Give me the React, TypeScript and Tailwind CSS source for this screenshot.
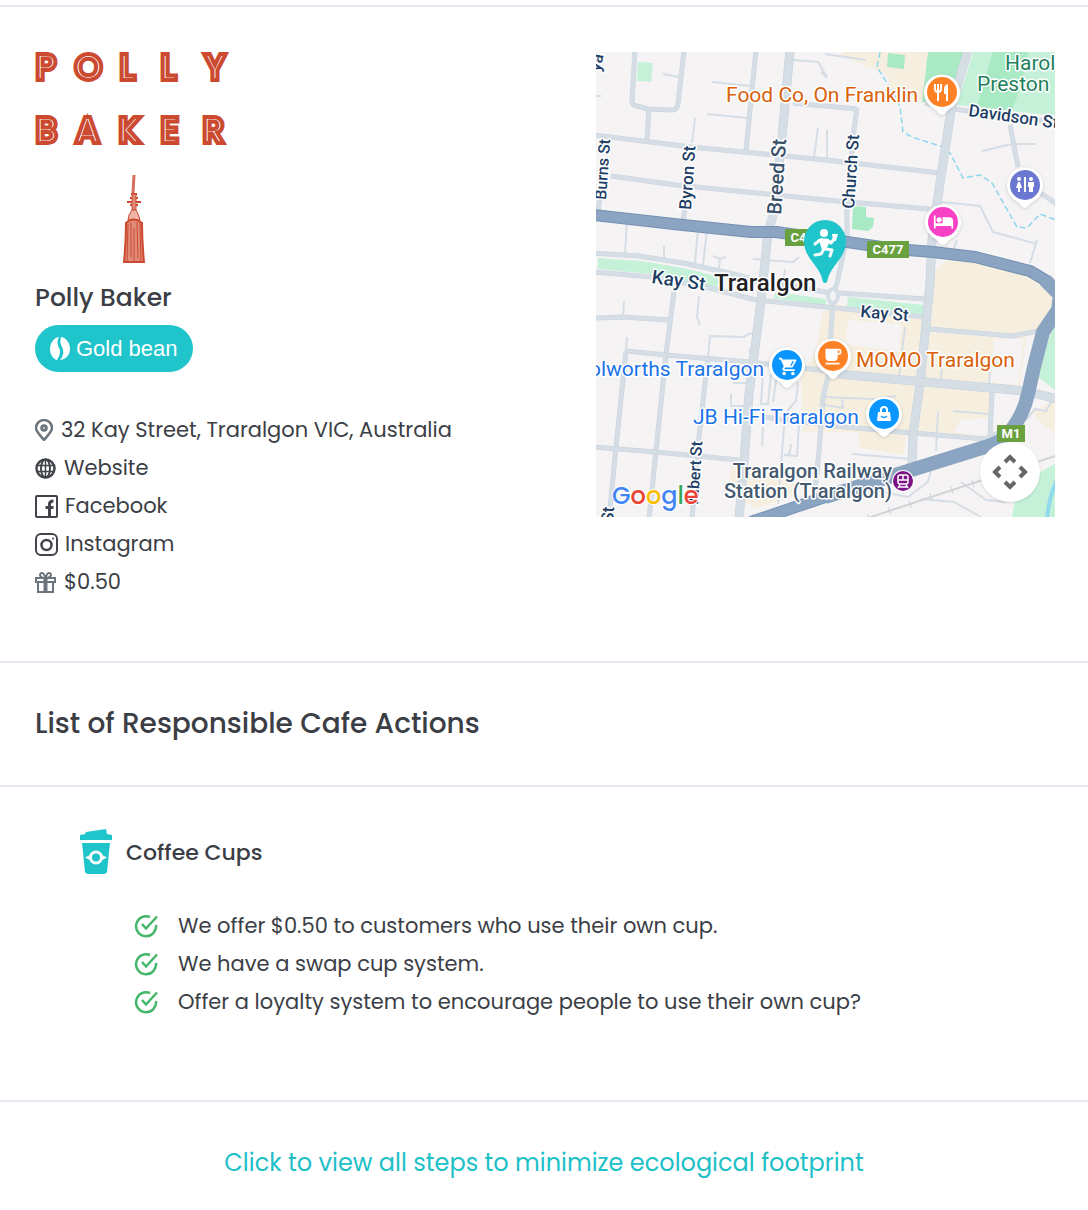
import type { ReactNode } from "react";
import { MdLocalCafe, MdLocalHotel, MdOutlineShoppingCart } from "react-icons/md";

type PinProps = {
  x: number;
  y: number;
  color: string;
  children: ReactNode;
};

type IconRowProps = {
  icon: ReactNode;
  href?: string;
  gap: string;
  children: ReactNode;
};

const ACTIONS = [
  "We offer $0.50 to customers who use their own cup.",
  "We have a swap cup system.",
  "Offer a loyalty system to encourage people to use their own cup?",
];

const HIGHWAY =
  "M-2 163L87 173L155 180L180 180L251 190L299 197L337 200L379 205L434 219L449 228L464 243L462 258L447 280L438 315L432 342Q427 365 412 382Q404 391 389 395L312 419L229 445L155 470";

const MAIN_ROADS = [
  "M194 -2L186 85L178 160L172 180L167 230L165 249L153 342L148 409L143 467",
  "M372 -2L357 48L354 65L344 131L336 188L334 231L332 252L324 332L317 382L316 412",
  "M242 322L329 330L429 339L461 347",
];

const ROADS = [
  "M261 56L257 85L251 158L251 185L241 231L237 244L236 265L232 325L227 345L223 399L219 440",
  "M39 -2L36 50Q37 54 41 54L52 57L76 58Q81 58 82 52L88 -2",
  "M53 57L51 87",
  "M160 -2L150 98",
  "M-2 83L95 95L230 108L344 121",
  "M15 124L80 133L230 148L344 158",
  "M92 132L87 170",
  "M8 110L2 160",
  "M-2 201L43 204L87 211L133 221L160 228L229 240L329 247",
  "M-2 220L57 225L110 235L160 248L230 255L329 265",
  "M78 240L70 302L53 467",
  "M30 299L20 395L13 467",
  "M112 305L103 385L96 467",
  "M-2 266L27 265L73 268",
  "M30 299L70 303L153 310L242 320",
  "M-2 395L60 400L143 408",
  "M334 277L416 284L442 279",
  "M167 365L249 375L317 381L389 387L405 380",
  "M396 340L394 384",
  "M197 51L261 57",
  "M329 51L357 57L459 70",
  "M414 73L422 115",
  "M440 138L461 152",
];

const LANES = [
  "M67 22L83 25M116 30L155 34M111 62L152 66M99 66L96 91M-2 44L5 44",
  "M31 168L29 201M102 176L99 211M111 178L107 213M68 194L68 206",
  "M197 8L222 10L231 25M222 76L218 105M231 78L231 106",
  "M157 207L197 210L203 205M117 204L124 207L130 205M124 207L123 216M189 217L188 225",
  "M28 249L27 265M31 285L30 299M103 244L101 265L104 273",
  "M112 305L114 284L148 285L152 282L158 281M153 300L160 288",
  "M135 342L135 354L150 354M137 331L152 331",
  "M167 322L165 352L172 352L175 322M181 322L177 350M167 375L166 394",
  "M202 330L200 349L192 358L188 375L182 452M203 372L201 404L188 403M195 392L193 404",
  "M309 275L303 325M346 308L345 328M342 359L340 399M357 359L392 362",
  "M229 345L249 346L279 347L300 344M246 346L247 356L229 353",
  "M256 402L316 407M394 320L393 332",
  "M346 150L384 154L397 180L441 192M441 188L434 211M361 188L358 196",
  "M386 99L416 92L439 92M229 2L270 8M225 20L231 26",
  "M430 368L439 357L450 359L458 345M335 418L332 430L312 445L272 437",
  "M325 447L358 450L385 465M365 430L390 448L410 450",
];

// Tear-drop marker with a round coloured face
function Pin({ x, y, color, children }: PinProps) {
  return (
    <g transform={`translate(${x} ${y})`}>
      <path
        d="M0 23C-3 23 -4 19 -9 16A18 18 0 1 1 9 16C4 19 3 23 0 23Z"
        fill="#fff"
        className="drop-shadow"
      />
      <circle r="15" fill={color} />
      <g color="#fff">{children}</g>
    </g>
  );
}

function Shield({ x, y, w, label }: { x: number; y: number; w: number; label: string }) {
  return (
    <g>
      <rect x={x} y={y} width={w} height="17" fill="#69a040" />
      <text
        x={x + w / 2}
        y={y + 13}
        textAnchor="middle"
        fontSize="13"
        fontWeight="700"
        fill="#fff"
      >
        {label}
      </text>
    </g>
  );
}

function MapView() {
  return (
    <div className="relative h-[465px] overflow-hidden bg-[#f5f3f4]">
      <svg
        viewBox="0 0 459 465"
        preserveAspectRatio="xMidYMid slice"
        className="block h-full w-full font-['Roboto',sans-serif]"
        role="img"
        aria-label="Map of Traralgon"
      >
        <g fill="#f6efdf">
          <path d="M245 0H332L326 50L300 48L290 22L245 4Z" />
          <path d="M338 222Q345 206 365 207Q400 212 452 231L459 255L445 276L416 282L334 276Z" />
          <path d="M226 262L240 252L332 268L334 280L416 287L430 283L424 334L396 336L394 384L310 381L308 403L264 396L262 380L207 380L205 325L220 300Z" />
          <path d="M135 415L165 420L199 432L195 445L160 456L132 440Z" />
          <path d="M437 360L459 347V382L446 372Z" />
        </g>
        <g fill="#f5f3f4">
          <path d="M252 268L305 272L303 300L250 292Z" />
          <path d="M398 287L428 287L422 333L394 330Z" />
          <path d="M358 380L364 368L393 366L392 384Z" />
        </g>
        <g fill="#c4f1d8">
          <path d="M377 0H459V64L361 53Z" />
          <path d="M42 10L57 11L55 30L41 29Z" />
          <path d="M2 206L45 209L87 216L128 226L120 235L57 222L2 217Z" />
          <path d="M180 240L230 247V254L177 246Z" />
          <path d="M252 245L327 253V263L251 255Z" />
          <path d="M459 273L449 295L442 325L459 338Z" />
          <path d="M422 432L459 412V465H416Z" />
        </g>
        <g fill="#a9eac4">
          <path d="M332 0H371L352 50L326 50Z" />
          <path d="M397 0H432L426 30L416 59L381 54Z" />
          <path d="M292 1L309 3L308 17L291 15Z" />
          <path d="M257 154L270 155L270 165L278 166L277 175L272 179L256 177Z" />
        </g>
        <path d="M461 428Q453 445 451 467" fill="none" stroke="#90daee" strokeWidth="4" />
        <path
          d="M284 0L281 15L291 31L301 48L304 55L307 80L316 85L347 95L354 101L367 126L384 123L396 131L421 175L431 176L444 162L460 168"
          fill="none"
          stroke="#8fd6ec"
          strokeWidth="1.5"
          strokeDasharray="6 3"
        />
        <g fill="none" stroke="#d5dde5" strokeLinejoin="round">
          {LANES.map((d) => (
            <path key={d} d={d} strokeWidth="2" />
          ))}
          {ROADS.map((d) => (
            <g key={d}>
              <path d={d} stroke="#cbd5df" strokeWidth="5" />
              <path d={d} strokeWidth="4" />
            </g>
          ))}
          {MAIN_ROADS.map((d) => (
            <g key={d}>
              <path d={d} stroke="#c7d2dd" strokeWidth="9" />
              <path d={d} strokeWidth="8" />
            </g>
          ))}
          <ellipse cx="237" cy="244" rx="5" ry="7" fill="#f5f3f4" strokeWidth="4" />
        </g>
        <path d="M272 466L459 404" stroke="#cfd3d8" strokeWidth="2" />
        <path d="M272 466L459 404" stroke="#cfd3d8" strokeWidth="8" strokeDasharray="1 21" />
        <g fill="none" strokeLinejoin="round">
          <path d={HIGHWAY} stroke="#7391b4" strokeWidth="12" />
          <path d={HIGHWAY} stroke="#8ba4c1" strokeWidth="10" />
          <path
            d="M449 228L464 243L462 258L447 280L438 315L432 342Q427 365 412 382Q404 391 389 395L312 419L229 445"
            stroke="#8ba4c1"
            strokeWidth="14"
          />
        </g>
        <g stroke="#fff" strokeWidth="3" strokeLinejoin="round" paintOrder="stroke">
          <g fontSize="17" fontWeight="500" fill="#1f3f66">
            <text transform="translate(10 148) rotate(-86)" fontSize="16">Burns St</text>
            <text transform="translate(95 158) rotate(-86)">Byron St</text>
            <text transform="translate(258 157) rotate(-86)">Church St</text>
            <text transform="translate(102 452) rotate(-86)" fontSize="16">Albert St</text>
            <text transform="translate(17 471) rotate(-86)">St</text>
            <text transform="translate(4 20) rotate(-78)">ya</text>
            <text transform="translate(185 163) rotate(-86)" fontSize="20" fill="#3a5068">
              Breed St
            </text>
            <text transform="translate(55 231) rotate(8)" fontSize="19">Kay St</text>
            <text transform="translate(264 265) rotate(5)">Kay St</text>
            <text transform="translate(372 64) rotate(8)">Davidson St</text>
          </g>
          <g fontSize="21" fill="#1f7f5c">
            <text x="409" y="18">Harold</text>
            <text x="381" y="39">Preston</text>
          </g>
          <g fontSize="21">
            <text x="130" y="50" fill="#d9600a">Food Co, On Franklin</text>
            <text x="260" y="315" fill="#d9600a">MOMO Traralgon</text>
            <text x="168" y="324" textAnchor="end" fill="#1a73e8">Woolworths Traralgon</text>
            <text x="97" y="372" fill="#1a73e8">JB Hi-Fi Traralgon</text>
          </g>
          <g fontSize="20" fontWeight="500" fill="#455a70" textAnchor="end">
            <text x="296" y="426">Traralgon Railway</text>
            <text x="296" y="446">Station (Traralgon)</text>
          </g>
          <text x="118" y="239" fontSize="24" fontWeight="500" fill="#202124">
            Traralgon
          </text>
        </g>
        <Shield x={189} y={177} w={42} label="C477" />
        <Shield x={271} y={189} w={42} label="C477" />
        <Shield x={401} y={373} w={28} label="M1" />
        <Pin x={346} y={40} color="#ff8126">
          <path d="M-7 -8V-3Q-7 0 -4 0Q-1 0 -1 -3V-8M-4 -8V9" fill="none" stroke="#fff" strokeWidth="2" />
          <path d="M2 2V-3Q2 -7 6 -8V9H4V2Z" fill="#fff" />
        </Pin>
        <Pin x={429} y={133} color="#6a78d1">
          <g fill="#fff">
            <path d="M-1 -8H1V7H-1Z" />
            <circle cx="-6" cy="-6" r="2" />
            <circle cx="6" cy="-6" r="2" />
            <path d="M-7 -3H-5L-3 3H-5V7H-7V3H-9Z" />
            <path d="M3 -3H9V2H8V7H4V2H3Z" />
          </g>
        </Pin>
        <Pin x={347} y={170} color="#f941c6">
          <MdLocalHotel x="-10" y="-11" width="20" height="20" />
        </Pin>
        <Pin x={191} y={313} color="#0b96ff">
          <MdOutlineShoppingCart x="-9" y="-9" width="18" height="18" />
          <path d="M-5 -5H6L3 1H-3Z" fill="#fff" />
        </Pin>
        <Pin x={237} y={304} color="#ff8126">
          <MdLocalCafe x="-11" y="-10" width="21" height="21" />
        </Pin>
        <Pin x={288} y={362} color="#0b96ff">
          <path d="M-6 -2H6L7 7H-7Z" fill="#fff" />
          <path d="M-3 -2V-4A3 3 0 0 1 3 -4V-2" fill="none" stroke="#fff" strokeWidth="2" />
          <path d="M-3 2Q0 5 3 2" fill="none" stroke="#0b96ff" strokeWidth="1.5" />
        </Pin>
        <circle cx="307" cy="429" r="11" fill="#fff" />
        <circle cx="307" cy="429" r="10" fill="#7b1286" />
        <g fill="none" stroke="#fff" strokeWidth="1.5">
          <rect x="302" y="423" width="10" height="9" rx="2" />
          <path d="M302 428H312M307 423V428M304 433L302 436M310 433L312 436M303 435H311" />
        </g>
        <path
          d="M227 230C224 213 208 207 208 189A21 21 0 0 1 250 189C250 207 234 213 231 230Q229 232 227 230Z"
          fill="#20c4cb"
        />
        <g fill="none" stroke="#fff" strokeWidth="3" strokeLinecap="round" strokeLinejoin="round">
          <circle cx="228" cy="181" r="4" fill="#fff" stroke="none" />
          <path d="M219 192L224 188H231L235 191L238 187" />
          <path d="M236 182H242L240 189H237Z" fill="#fff" stroke="none" />
          <path d="M226 189L228 196L231 190" strokeWidth="5" />
          <path d="M228 197L225 202L219 203M230 197L236 198L234 204" />
        </g>
        <text
          x="16"
          y="452"
          fontSize="24"
          fontWeight="500"
          className="font-['Poppins','Inter',sans-serif]"
          stroke="#fff"
          strokeWidth="2"
          paintOrder="stroke"
        >
          <tspan fill="#4285f4">G</tspan>
          <tspan fill="#ea4335">o</tspan>
          <tspan fill="#fbbc04">o</tspan>
          <tspan fill="#4285f4">g</tspan>
          <tspan fill="#34a853">l</tspan>
          <tspan fill="#ea4335">e</tspan>
        </text>
      </svg>
      <button
        type="button"
        aria-label="Map camera controls"
        className="absolute right-[15px] bottom-[15px] flex size-[60px] items-center justify-center rounded-full bg-white shadow"
      >
        <svg viewBox="-20 -20 40 40" className="size-10" fill="none" stroke="#666" strokeWidth="4">
          <path d="M-5 -10L0 -15L5 -10M-5 10L0 15L5 10M-10 -5L-15 0L-10 5M10 -5L15 0L10 5" />
        </svg>
      </button>
    </div>
  );
}

// The wordmark is stacked twice: a thick outline, then a thin inline on top
function Logo() {
  return (
    <svg
      viewBox="0 0 196 212"
      className="block h-[212px] w-[196px] overflow-visible font-['Poppins','Inter',sans-serif]"
      role="img"
      aria-label="Polly Baker logo"
    >
      <defs>
        <g id="wordmark" fontSize="34">
          <text x="1 40 85 126 170" y="27">POLLY</text>
          <text x="1 41 84 126 168" y="90">BAKER</text>
        </g>
      </defs>
      <use href="#wordmark" fill="#cb4a30" stroke="#cb4a30" strokeWidth="6" />
      <use href="#wordmark" fill="#fff" stroke="#cb4a30" strokeWidth="2" />
      <g fill="none" stroke="#cb4a30">
        <path d="M99 123L98 141" strokeWidth="3" stroke="#d66f5a" />
        <path d="M96 142H102M95 146H103M92 150H106M95 153H103M97 157H101" strokeWidth="2" />
        <path d="M97 142V158H101V142Z" fill="#e08b78" strokeWidth="1" />
        <path d="M97 158Q93 163 93 168H105Q104 163 101 158Z" fill="#efb5a8" strokeWidth="1" />
        <path d="M91 171Q98 164 107 171Q107 190 109 210H89Q91 190 91 171Z" fill="#e08b78" strokeWidth="2" />
        <path d="M93 172L92 210M96 171V205M99 176V210M102 170L103 206M105 171L106 210" strokeWidth="1" />
      </g>
    </svg>
  );
}

function BeanIcon() {
  return (
    <svg viewBox="0 0 20 24" className="h-6 w-5" fill="#fff" aria-hidden="true">
      <path d="M9 0C3 1 0 7 0 12S3 22 7 23C10 18 11 15 9 11C7 7 7 4 9 0Z" />
      <path d="M11 0C17 1 20 7 20 12S17 22 10 23C14 18 14 14 12 10C10 6 10 4 11 0Z" />
    </svg>
  );
}

function PlaceIcon() {
  return (
    <svg viewBox="0 0 18 22" className="h-[22px] w-[18px]" fill="none" stroke="#6c757d" strokeWidth="2.5" aria-hidden="true">
      <path d="M9 21C6 17 1 13 1 9A8 8 0 0 1 17 9C17 13 12 17 9 21Z" />
      <circle cx="9" cy="9" r="2.5" fill="#b9bec3" />
    </svg>
  );
}

function GlobeIcon() {
  return (
    <svg viewBox="0 0 21 21" className="size-[21px]" fill="none" stroke="#41444b" strokeWidth="2" aria-hidden="true">
      <circle cx="10.5" cy="10.5" r="9" strokeWidth="2.5" />
      <ellipse cx="10.5" cy="10.5" rx="4.5" ry="9" />
      <path d="M10.5 1V20M2 7.5H19M2 13.5H19" strokeWidth="1.5" />
    </svg>
  );
}

function FacebookIcon() {
  return (
    <svg viewBox="0 0 23 23" className="size-[23px]" fill="none" stroke="#41444b" aria-hidden="true">
      <rect x="1" y="1" width="21" height="21" rx="1" strokeWidth="2" />
      <path d="M14.5 22V9Q14.5 6 18.5 6M10.5 12.5H18.5" strokeWidth="3" />
    </svg>
  );
}

function InstagramIcon() {
  return (
    <svg viewBox="0 0 23 23" className="size-[23px]" fill="none" stroke="#41444b" strokeWidth="2" aria-hidden="true">
      <rect x="1" y="1" width="21" height="21" rx="5" />
      <circle cx="11.5" cy="12" r="5" strokeWidth="2.5" />
      <circle cx="18" cy="5.5" r="1" fill="#41444b" stroke="none" />
    </svg>
  );
}

function GiftIcon() {
  return (
    <svg viewBox="0 0 21 21" className="size-[21px]" fill="none" stroke="#6c757d" strokeWidth="2" aria-hidden="true">
      <path d="M1 6H20V10H1ZM3 10V20H18V10" />
      <path d="M10.5 6V20" strokeWidth="4" />
      <path d="M10 6C4 6 4 1 7 1Q9 1 10.5 6Q12 1 14 1C17 1 17 6 11 6" />
    </svg>
  );
}

function CupIcon() {
  return (
    <svg viewBox="0 0 32 46" className="h-[46px] w-8" aria-hidden="true">
      <path d="M0 11V6L5 5L6 3L26 0L27 5L32 6V11Z" fill="#20c4cb" />
      <path d="M2 14H30L27 43Q26 45 24 45H8Q6 45 5 43Z" fill="#20c4cb" />
      <path d="M5 28.5L12 25V32ZM27 28.5L20 25V32Z" fill="#fff" />
      <circle cx="16" cy="28.5" r="5.5" fill="#20c4cb" stroke="#fff" strokeWidth="3" />
    </svg>
  );
}

function CheckIcon() {
  return (
    <svg viewBox="0 0 24 24" className="size-6" fill="none" stroke="#43b669" strokeWidth="2.5" aria-hidden="true">
      <path d="M16 3A10 10 0 1 0 22 11" />
      <path d="M8 10L12 14.5L23 2.5" />
    </svg>
  );
}

function IconRow({ icon, href, gap, children }: IconRowProps) {
  return (
    <li className={`flex h-[38px] items-center ${gap}`}>
      {icon}
      {href ? <a href={href}>{children}</a> : <span>{children}</span>}
    </li>
  );
}

export default function App() {
  return (
    <main className="bg-white pt-[5px] font-['Poppins','Inter',sans-serif] text-[21px] text-[#3b3e45]">
      <section className="grid grid-cols-[55fr_45fr] border-y-2 border-[#e8e9f0] pt-[45px] pr-[33px] pb-[60px] pl-[35px]">
        <div>
          <Logo />
          <h1 className="mt-4 text-[25px] leading-9 font-medium">Polly Baker</h1>
          <div className="mt-[9px] flex h-[47px] w-fit items-center gap-[6px] rounded-full bg-[#20c4cb] px-[15px] font-['Liberation_Sans',sans-serif] text-[22px] text-white">
            <BeanIcon />
            Gold bean
          </div>
          <ul className="mt-[39px]">
            <IconRow icon={<PlaceIcon />} gap="gap-[8px]">
              32 Kay Street, Traralgon VIC, Australia
            </IconRow>
            <IconRow icon={<GlobeIcon />} href="#website" gap="gap-[8px]">
              Website
            </IconRow>
            <IconRow icon={<FacebookIcon />} href="#facebook" gap="gap-[7px]">
              Facebook
            </IconRow>
            <IconRow icon={<InstagramIcon />} href="#instagram" gap="gap-[7px]">
              Instagram
            </IconRow>
            <IconRow icon={<GiftIcon />} gap="gap-[8px]">
              $0.50
            </IconRow>
          </ul>
        </div>
        <MapView />
      </section>

      <section className="border-b-2 border-[#e8e9f0] px-[35px] py-10">
        <h2 className="text-[28px] leading-[42px] font-medium">
          List of Responsible Cafe Actions
        </h2>
      </section>

      <section className="border-b-2 border-[#e8e9f0] px-20 pt-[42px] pb-[79px]">
        <div className="flex items-center gap-[14px]">
          <CupIcon />
          <h3 className="text-[22px] font-medium">Coffee Cups</h3>
        </div>
        <ul className="mt-8 pl-[54px]">
          {ACTIONS.map((action) => (
            <IconRow key={action} icon={<CheckIcon />} gap="gap-[20px]">
              {action}
            </IconRow>
          ))}
        </ul>
      </section>

      <div className="py-[43px] text-center">
        <a href="#steps" className="text-[24px] leading-9 text-[#20c0c8]">
          Click to view all steps to minimize ecological footprint
        </a>
      </div>
    </main>
  );
}
